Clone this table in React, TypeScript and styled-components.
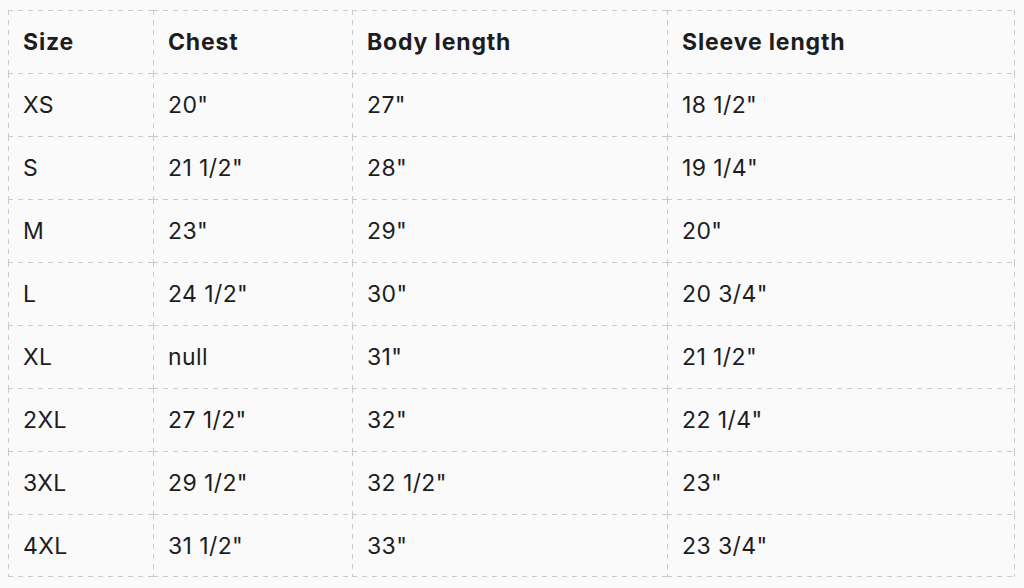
import React from "react";
import styled, { createGlobalStyle } from "styled-components";

const Global = createGlobalStyle`
  html, body { margin: 0; padding: 0; background: #fafafa; }
  body { font-family: Inter, "Noto Sans", "Liberation Sans", sans-serif; color: #1d1d1f; }
`;

const Wrap = styled.div`
  padding: 10px 9px 0 8px;
`;

const Table = styled.table`
  width: 100%;
  border-collapse: collapse;
  border-spacing: 0;
  table-layout: fixed;
  background: #fafafa;
`;

const Col = styled.col<{ $w?: number }>`
  width: ${(p) => (p.$w ? `${p.$w}px` : "auto")};
`;

const DASH = "#cbcbcb";

const Cell = styled.td<{ $head?: boolean; $lastCol?: boolean; $lastRow?: boolean }>`
  height: 63px;
  padding: 0 0 0 15px;
  font-size: 23px;
  letter-spacing: ${(p) => (p.$head ? "0.85px" : "0.4px")};
  font-weight: ${(p) => (p.$head ? 700 : 400)};
  text-align: left;
  vertical-align: middle;
  white-space: nowrap;
  color: #1d1d1f;
  box-sizing: border-box;
  background-color: #fafafa;
  background-image:
    linear-gradient(to right, ${DASH} 50%, transparent 50%),
    linear-gradient(to bottom, ${DASH} 50%, transparent 50%)
    ${(p) => (p.$lastCol ? `, linear-gradient(to bottom, ${DASH} 50%, transparent 50%)` : "")}
    ${(p) => (p.$lastRow ? `, linear-gradient(to right, ${DASH} 50%, transparent 50%)` : "")};
  background-size:
    10px 1px,
    1px 10px
    ${(p) => (p.$lastCol ? ", 1px 10px" : "")}
    ${(p) => (p.$lastRow ? ", 10px 1px" : "")};
  background-repeat:
    repeat-x,
    repeat-y
    ${(p) => (p.$lastCol ? ", repeat-y" : "")}
    ${(p) => (p.$lastRow ? ", repeat-x" : "")};
  background-position:
    left top,
    left top
    ${(p) => (p.$lastCol ? ", right top" : "")}
    ${(p) => (p.$lastRow ? ", left bottom" : "")};
`;

const headers = ["Size", "Chest", "Body length", "Sleeve length"];

const rows: string[][] = [
  ["XS", "20\"", "27\"", "18 1/2\""],
  ["S", "21 1/2\"", "28\"", "19 1/4\""],
  ["M", "23\"", "29\"", "20\""],
  ["L", "24 1/2\"", "30\"", "20 3/4\""],
  ["XL", "null", "31\"", "21 1/2\""],
  ["2XL", "27 1/2\"", "32\"", "22 1/4\""],
  ["3XL", "29 1/2\"", "32 1/2\"", "23\""],
  ["4XL", "31 1/2\"", "33\"", "23 3/4\""],
];

export default function App() {
  return (
    <Wrap>
      <Global />
      <Table>
        <colgroup>
          <Col $w={145} />
          <Col $w={199} />
          <Col $w={315} />
          <Col />
        </colgroup>
        <thead>
          <tr>
            {headers.map((h, i) => (
              <Cell as="th" $head $lastCol={i === headers.length - 1} key={h}>
                {h}
              </Cell>
            ))}
          </tr>
        </thead>
        <tbody>
          {rows.map((r, ri) => (
            <tr key={r[0]}>
              {r.map((c, i) => (
                <Cell
                  key={i}
                  $lastCol={i === r.length - 1}
                  $lastRow={ri === rows.length - 1}
                >
                  {c}
                </Cell>
              ))}
            </tr>
          ))}
        </tbody>
      </Table>
    </Wrap>
  );
}
